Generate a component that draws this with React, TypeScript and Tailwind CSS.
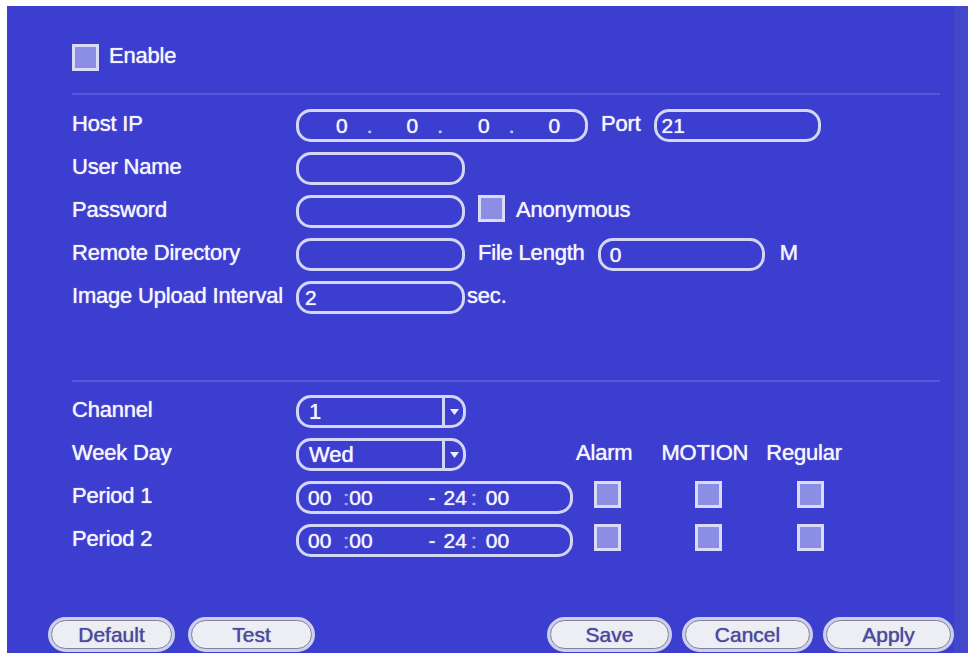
import React from 'react';

const Check: React.FC = () => (
  <span className="inline-block w-[27px] h-[27px] border-[3px] border-[#d9dbf7] bg-[#8b8ee3] shrink-0" />
);

const Field: React.FC<{ w: string; children?: React.ReactNode }> = ({ w, children }) => (
  <div className={`${w} h-[33px] border-[3px] border-[#d4d6f6] rounded-[15px] flex items-center text-[21px] leading-none shrink-0`}>
    {children}
  </div>
);

const Select: React.FC<{ value: string }> = ({ value }) => (
  <div className="w-[170px] h-[33px] border-[3px] border-[#d4d6f6] rounded-[15px] flex items-center text-[22px] leading-none shrink-0">
    <span className="flex-1 pl-[10px]">{value}</span>
    <span className="w-[3px] self-stretch bg-[#d4d6f6]" />
    <span className="w-[18px] flex justify-center">
      <svg width="9" height="6" viewBox="0 0 9 6"><path d="M0 0 L9 0 L4.5 6 Z" fill="#eef0ff" /></svg>
    </span>
  </div>
);

const Btn: React.FC<{ label: string; w: string }> = ({ label, w }) => (
  <div className={`${w} h-[35px] rounded-full border-2 border-[#cdd0ec] bg-[#cdd0ec] p-[1px] shrink-0`}>
    <div className="h-full rounded-full border border-[#7f819f] bg-[#ededf4] flex items-center justify-center text-[21px] text-[#4b4a9c] leading-none [text-shadow:0_0_1px_#4b4a9c]">
      {label}
    </div>
  </div>
);

const Txt: React.FC<{ className?: string; children: React.ReactNode }> = ({ className, children }) => (
  <span className={`text-[22px] tracking-[-0.2px] leading-none -mt-[3px] ${className ?? ''}`}>{children}</span>
);

const Row: React.FC<{ label: string; children?: React.ReactNode }> = ({ label, children }) => (
  <div className="h-[43px] flex items-center">
    <Txt className="w-[224px] shrink-0">{label}</Txt>
    {children}
  </div>
);

const Time: React.FC = () => (
  <Field w="w-[277px]">
    <span className="ml-[9px]">00</span>
    <span className="ml-[12px] text-[#9fa3e8]">:</span>
    <span>00</span>
    <span className="ml-[56px]">-</span>
    <span className="ml-[8px]">24</span>
    <span className="ml-[4px] text-[#9fa3e8]">:</span>
    <span className="ml-[9px]">00</span>
  </Field>
);

export default function App() {
  return (
    <div className="w-[968px] h-[653px] bg-white pt-[6px] pl-[7px] overflow-hidden" style={{ fontFamily: '"Liberation Sans", Arial, sans-serif' }}>
      <div className="h-[700px] bg-[#3b3ecf] border-r-[14px] border-[#4347c9] text-[#f4f4ff] flex flex-col [text-shadow:0_0_1px_#ffffff]">
        <div className="pl-[65px] pt-[30px] flex flex-col">
          <div className="h-[42px] flex items-center">
            <Check />
            <Txt className="ml-[10px]">Enable</Txt>
          </div>
          <div className="mt-[15px] h-[2px] w-[868px] bg-[#5459dc]" />

          <div className="mt-[9px] flex flex-col">
            <Row label="Host IP">
              <Field w="w-[292px]">
                <span className="ml-[37px]">0</span>
                <span className="ml-[19px] text-[#c4c7f4]">.</span>
                <span className="ml-[34px]">0</span>
                <span className="ml-[19px] text-[#c4c7f4]">.</span>
                <span className="ml-[35px]">0</span>
                <span className="ml-[19px] text-[#c4c7f4]">.</span>
                <span className="ml-[34px]">0</span>
              </Field>
              <Txt className="ml-[13px]">Port</Txt>
              <Field w="w-[167px] ml-[13px]">
                <span className="ml-[5px]">21</span>
              </Field>
            </Row>
            <Row label="User Name">
              <Field w="w-[169px]" />
            </Row>
            <Row label="Password">
              <Field w="w-[169px]" />
              <span className="ml-[13px]"><Check /></span>
              <Txt className="ml-[11px]">Anonymous</Txt>
            </Row>
            <Row label="Remote Directory">
              <Field w="w-[169px]" />
              <Txt className="ml-[13px]">File Length</Txt>
              <Field w="w-[167px] ml-[13px]">
                <span className="ml-[9px]">0</span>
              </Field>
              <Txt className="ml-[15px]">M</Txt>
            </Row>
            <Row label="Image Upload Interval">
              <Field w="w-[169px]">
                <span className="ml-[6px]">2</span>
              </Field>
              <Txt className="ml-[2px]">sec.</Txt>
            </Row>
          </div>

          <div className="mt-[61px] h-[2px] w-[868px] bg-[#5459dc]" />

          <div className="mt-[8px] flex flex-col">
            <Row label="Channel">
              <Select value="1" />
            </Row>
            <Row label="Week Day">
              <Select value="Wed" />
              <Txt className="ml-[110px]">Alarm</Txt>
              <Txt className="ml-[29px]">MOTION</Txt>
              <Txt className="ml-[18px]">Regular</Txt>
            </Row>
            <Row label="Period 1">
              <Time />
              <span className="ml-[21px]"><Check /></span>
              <span className="ml-[74px]"><Check /></span>
              <span className="ml-[75px]"><Check /></span>
            </Row>
            <Row label="Period 2">
              <Time />
              <span className="ml-[21px]"><Check /></span>
              <span className="ml-[74px]"><Check /></span>
              <span className="ml-[75px]"><Check /></span>
            </Row>
          </div>
        </div>

        <div className="mt-[55px] pl-[41px] flex justify-between">
          <div className="flex gap-[13px]">
            <Btn label="Default" w="w-[127px]" />
            <Btn label="Test" w="w-[127px]" />
          </div>
          <div className="flex gap-[10px]">
            <Btn label="Save" w="w-[125px]" />
            <Btn label="Cancel" w="w-[131px]" />
            <Btn label="Apply" w="w-[131px]" />
          </div>
        </div>
      </div>
    </div>
  );
}
